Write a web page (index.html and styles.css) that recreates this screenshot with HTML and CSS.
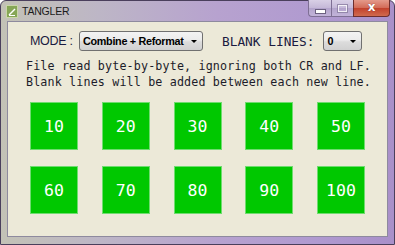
FILE: index.html
```html
<!DOCTYPE html>
<html lang="en">
<head>
    <meta charset="UTF-8">
    <title>TANGLER</title>
    <link rel="stylesheet" href="styles.css">
</head>
<body>
    <div class="window">
        <div class="titlebar">
            <svg class="app-icon" width="12" height="13" viewBox="0 0 12 13">
                <rect x="0.5" y="0.5" width="11" height="12" fill="#86a656" stroke="#c9d6a8"/>
                <path d="M3 10 L9 4" stroke="#ffffff" stroke-width="1.5"/>
                <path d="M3 10.5 H9" stroke="#ffffff" stroke-width="1"/>
            </svg>
            <span class="title">TANGLER</span>
            <div class="caption-buttons">
                <div class="cap-btn cap-min"><span class="min-bar"></span></div>
                <div class="cap-btn cap-max"><span class="max-box"></span></div>
                <div class="cap-btn cap-close">x</div>
            </div>
        </div>
        <div class="client">
            <div class="options">
                <span class="label label-mode">MODE :</span>
                <div class="combo combo-mode">
                    <span>Combine + Reformat</span>
                    <span class="arrow"></span>
                </div>
                <span class="label label-blank">BLANK LINES:</span>
                <div class="combo combo-blank">
                    <span>0</span>
                    <span class="arrow"></span>
                </div>
            </div>
            <p class="info">File read byte-by-byte, ignoring both CR and LF.<br>Blank lines will be added between each new line.</p>
            <div class="grid">
                <button class="num">10</button>
                <button class="num">20</button>
                <button class="num">30</button>
                <button class="num">40</button>
                <button class="num">50</button>
                <button class="num">60</button>
                <button class="num">70</button>
                <button class="num">80</button>
                <button class="num">90</button>
                <button class="num">100</button>
            </div>
        </div>
    </div>
</body>
</html>
```

FILE: styles.css
```css
body {
    margin: 0;
    background: #ffffff;
}
.window {
    width: 395px;
    height: 245px;
    box-sizing: border-box;
    border: 1px solid #4a3f5c;
    border-radius: 6px 6px 0 0;
    background: linear-gradient(90deg, #c3c2b6 0%, #bdb6c6 25%, #b7a2cf 55%, #b09ad0 80%, #a990c9 100%);
    padding: 0 6px 7px 6px;
    display: flex;
    flex-direction: column;
}
/* title bar */
.titlebar {
    height: 20px;
    margin: 0 -6px;
    padding: 0 0 0 5px;
    display: flex;
    align-items: center;
    font-family: "Liberation Sans", Arial, sans-serif;
    font-size: 10.5px;
    letter-spacing: -0.2px;
    color: #1b1b1b;
}
.app-icon {
    margin-right: 4px;
}
.caption-buttons {
    margin-left: auto;
    margin-right: 4px;
    align-self: flex-start;
    margin-top: -1px;
    display: flex;
}
.cap-btn {
    height: 17px;
    box-sizing: border-box;
    border: 1px solid #7e6f94;
    border-top: none;
    display: flex;
    align-items: center;
    justify-content: center;
    background: linear-gradient(#d9d0e6, #c5b8d8 50%, #b3a4cc 51%, #c2b3d9);
}
.cap-min {
    width: 23px;
    border-radius: 0 0 0 4px;
    border-right: none;
}
.cap-max {
    width: 22px;
    border-right: none;
}
.cap-close {
    width: 37px;
    border-radius: 0 0 4px 0;
    border-color: #6d2e2e;
    background: linear-gradient(#e49a8b, #d26a57 50%, #c2412c 51%, #d06a4e);
    color: #ffffff;
    font-family: "DejaVu Sans", sans-serif;
    font-weight: bold;
    font-size: 12px;
    line-height: 1;
    padding-bottom: 2px;
    text-shadow: 0 0 1px #5a1a1a;
}
.min-bar {
    width: 9px;
    height: 3px;
    margin-top: 6px;
    background: #ffffff;
    border: 1px solid #6b6080;
}
.max-box {
    width: 7px;
    height: 5px;
    border: 1px solid #ffffff;
    outline: 1px solid #8a7ea0;
    opacity: .8;
}
/* client */
.client {
    flex: 1;
    background: #ece9d8;
    border: 1px solid #8e8a9e;
    padding: 9px 0 0 18px;
}
.options {
    display: flex;
    align-items: center;
    margin-left: 4px;
    height: 20px;
}
.label {
    font-family: "DejaVu Sans Mono", monospace;
    font-size: 12.8px;
    color: #1a1a40;
}
.label-mode {
    width: 47px;
    font-family: "Liberation Sans", Arial, sans-serif;
    font-size: 12.5px;
    letter-spacing: -0.3px;
}
.label-blank {
    margin-left: 19px;
    margin-right: 9px;
}
.combo {
    height: 20px;
    box-sizing: border-box;
    border: 1px solid #707070;
    border-radius: 3px;
    background: linear-gradient(#f3f3f3, #ebebeb 45%, #dcdcdc 55%, #d0d0d0);
    display: flex;
    align-items: center;
    padding: 0 0 0 3px;
    font-family: "Liberation Sans", Arial, sans-serif;
    font-weight: bold;
    font-size: 10.8px;
    letter-spacing: -0.3px;
    color: #000000;
}
.combo-mode {
    width: 124px;
    margin-left: 2px;
}
.combo-blank {
    width: 39px;
}
.arrow {
    margin-left: auto;
    margin-right: 5px;
    width: 0;
    height: 0;
    border-left: 3.5px solid transparent;
    border-right: 3.5px solid transparent;
    border-top: 3.5px solid #000000;
}
.info {
    margin: 8px 0 0 0;
    font-family: "DejaVu Sans Mono", monospace;
    font-size: 11.7px;
    letter-spacing: 0.15px;
    line-height: 15.5px;
    color: #1c1c2a;
    white-space: nowrap;
}
.grid {
    margin: 12px 0 0 4px;
    display: grid;
    grid-template-columns: repeat(5, 48px);
    column-gap: 23.75px;
    row-gap: 16px;
}
.num {
    width: 48px;
    height: 48px;
    box-sizing: border-box;
    border: 1px solid #6fdc6f;
    background: #00c800;
    color: #ffffff;
    font-family: "DejaVu Sans Mono", monospace;
    font-size: 16.5px;
    padding: 0;
    cursor: pointer;
}
```
